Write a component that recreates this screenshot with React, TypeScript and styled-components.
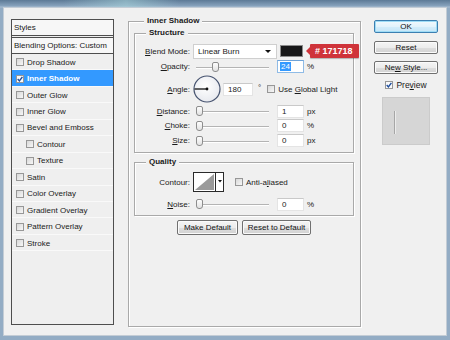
import React from 'react';
import styled, { createGlobalStyle } from 'styled-components';

const GlobalStyle = createGlobalStyle`
  html, body {
    margin: 0;
    padding: 0;
    background: #93acc4;
  }
  body {
    font-family: "Liberation Sans", Arial, sans-serif;
    font-size: 8px;
    color: #1a1a1a;
  }
  u {
    text-underline-offset: 1px;
  }
`;

const styleItems = [
  { name: 'Drop Shadow' },
  { name: 'Inner Shadow', checked: true, selected: true },
  { name: 'Outer Glow' },
  { name: 'Inner Glow' },
  { name: 'Bevel and Emboss' },
  { name: 'Contour', indent: true },
  { name: 'Texture', indent: true },
  { name: 'Satin' },
  { name: 'Color Overlay' },
  { name: 'Gradient Overlay' },
  { name: 'Pattern Overlay' },
  { name: 'Stroke' },
];

const Checkbox: React.FC<{ checked?: boolean }> = ({ checked }) => (
  <StyledBox $checked={checked}>
    {checked && (
      <svg width="6" height="6" viewBox="0 0 6 6">
        <path d="M0.7 3.1 L2.4 4.9 L5.4 0.9" fill="none" stroke="#1e4d9c" strokeWidth="1.4" />
      </svg>
    )}
  </StyledBox>
);

const Slider: React.FC<{ value: number }> = ({ value }) => (
  <StyledSlider>
    <Thumb style={{ left: `${(value / 100) * 66}px` }} />
  </StyledSlider>
);

const AngleDial: React.FC = () => (
  <svg width="28" height="28" viewBox="0 0 28 28">
    <defs>
      <radialGradient id="dialFill" cx="45%" cy="40%" r="65%">
        <stop offset="0%" stopColor="#ffffff" />
        <stop offset="100%" stopColor="#e6e8ee" />
      </radialGradient>
    </defs>
    <circle cx="14" cy="14" r="13" fill="url(#dialFill)" stroke="#46536f" strokeWidth="1.2" />
    <line x1="1.5" y1="14" x2="14" y2="14" stroke="#111" strokeWidth="1.3" />
    <circle cx="14" cy="14" r="1.4" fill="#111" />
  </svg>
);

const ContourPicker: React.FC = () => (
  <svg width="31" height="20" viewBox="0 0 31 20">
    <rect x="0.5" y="0.5" width="30" height="19" fill="#fff" stroke="#2a2a2a" />
    <polygon points="2,18 21,2 21,18" fill="#9a9a9a" />
    <line x1="22.5" y1="0.5" x2="22.5" y2="19.5" stroke="#2a2a2a" />
    <polygon points="25,8 29,8 27,10.5" fill="#111" />
  </svg>
);

const App: React.FC = () => {
  return (
    <>
      <GlobalStyle />
      <Window>
        <Content>
          <StylesList>
            <ListHead>Styles</ListHead>
            <ListOption>Blending Options: Custom</ListOption>
            {styleItems.map((item) => (
              <ListRow key={item.name} $selected={item.selected} $indent={item.indent}>
                <Checkbox checked={item.checked} />
                <span>{item.name}</span>
              </ListRow>
            ))}
          </StylesList>

          <OuterGroup>
            <Legend $ml={10}>Inner Shadow</Legend>
            <Group $mt={2}>
              <Legend $ml={11}>Structure</Legend>
              <GroupBody>
                <Row $h={16}>
                  <Label><u>B</u>lend Mode:</Label>
                  <Select>
                    <span>Linear Burn</span>
                    <Caret />
                  </Select>
                  <Swatch />
                  <ColorTag># 171718</ColorTag>
                </Row>
                <Row $h={15}>
                  <Label><u>O</u>pacity:</Label>
                  <Slider value={24} />
                  <Field $focused>
                    <Highlight>24</Highlight>
                  </Field>
                  <Unit>%</Unit>
                </Row>
                <Row $h={30}>
                  <Label><u>A</u>ngle:</Label>
                  <AngleDial />
                  <Field $w={30} $ml={2}>180</Field>
                  <Degree>°</Degree>
                  <CheckLabel $ml={6}>
                    <Checkbox />
                    <span>Use <u>G</u>lobal Light</span>
                  </CheckLabel>
                </Row>
                <Row $h={14}>
                  <Label><u>D</u>istance:</Label>
                  <Slider value={0} />
                  <Field>1</Field>
                  <Unit>px</Unit>
                </Row>
                <Row $h={15}>
                  <Label><u>C</u>hoke:</Label>
                  <Slider value={0} />
                  <Field>0</Field>
                  <Unit>%</Unit>
                </Row>
                <Row $h={15}>
                  <Label><u>S</u>ize:</Label>
                  <Slider value={0} />
                  <Field>0</Field>
                  <Unit>px</Unit>
                </Row>
              </GroupBody>
            </Group>

            <Group $mt={4}>
              <Legend $ml={11}>Quality</Legend>
              <GroupBody>
                <Row $h={20}>
                  <Label>Contour:</Label>
                  <ContourPicker />
                  <CheckLabel $ml={11}>
                    <Checkbox />
                    <span>Anti-a<u>l</u>iased</span>
                  </CheckLabel>
                </Row>
                <Row $h={14} $mt={5}>
                  <Label><u>N</u>oise:</Label>
                  <Slider value={0} />
                  <Field>0</Field>
                  <Unit>%</Unit>
                </Row>
              </GroupBody>
            </Group>

            <ButtonRow>
              <Button $w={61} $h={15}>Make Default</Button>
              <Button $w={69} $h={15}>Reset to Default</Button>
            </ButtonRow>
          </OuterGroup>

          <SideColumn>
            <Button $primary>OK</Button>
            <Button>Reset</Button>
            <Button>Ne<u>w</u> Style...</Button>
            <PreviewToggle>
              <Checkbox checked />
              <span>Pre<u>v</u>iew</span>
            </PreviewToggle>
            <PreviewThumb>
              <PreviewLine />
            </PreviewThumb>
          </SideColumn>
        </Content>
      </Window>
    </>
  );
};

const Window = styled.div`
  width: 450px;
  height: 340px;
  box-sizing: border-box;
  padding: 7px 3px 4px 3px;
  background:
    linear-gradient(90deg, rgba(170, 215, 220, 0) 14%, rgba(170, 215, 220, 0.55) 28%, rgba(170, 215, 220, 0) 40%) top / 100% 7px no-repeat,
    linear-gradient(#5d7a96 0px, #88a3bd 6px, #a9bdd1 7px, #93acc4 8px);
`;

const Content = styled.div`
  display: flex;
  align-items: flex-start;
  height: 100%;
  box-sizing: border-box;
  background: #f0f0f0;
  border: 1px solid #c3ccd5;
`;

const StylesList = styled.div`
  width: 103px;
  height: 306px;
  margin: 11px 0 0 7px;
  box-sizing: border-box;
  border: 1px solid #4e4e4e;
  background: #efefef;
  flex: none;
`;

const ListHead = styled.div`
  height: 15px;
  line-height: 15px;
  padding-left: 2px;
  background: #f7f7f7;
  border-bottom: 1px solid #4e4e4e;
`;

const ListOption = styled.div`
  height: 15px;
  line-height: 15px;
  margin-top: 1px;
  padding-left: 2px;
  background: #f7f7f7;
  border-top: 1px solid #4e4e4e;
  border-bottom: 1px solid #4e4e4e;
`;

const ListRow = styled.div<{ $selected?: boolean; $indent?: boolean }>`
  display: flex;
  align-items: center;
  gap: 3px;
  height: 16.45px;
  padding-left: ${(p) => (p.$indent ? 14 : 4)}px;
  box-shadow: inset 0 -1px 0 #f9f9f9;
  background: ${(p) => (p.$selected ? '#3399ff' : 'transparent')};
  color: ${(p) => (p.$selected ? '#fff' : '#1a1a1a')};
  font-weight: ${(p) => (p.$selected ? 'bold' : 'normal')};
`;

const StyledBox = styled.span<{ $checked?: boolean }>`
  display: inline-flex;
  align-items: center;
  justify-content: center;
  flex: none;
  width: 6px;
  height: 6px;
  border: 1px solid #979797;
  background: ${(p) => (p.$checked ? '#fafafa' : 'linear-gradient(135deg, #d8d8d8, #f7f7f7)')};
`;

const OuterGroup = styled.fieldset`
  margin: 8px 0 0 14px;
  padding: 0 6px 0 5px;
  min-width: 0;
  width: 233px;
  height: 311px;
  box-sizing: border-box;
  flex: none;
  border: 1px solid #a9a9a9;
  box-shadow: inset 1px 1px 0 #fff, 1px 1px 0 #fff;
`;

const Group = styled.fieldset<{ $mt?: number }>`
  margin: ${(p) => p.$mt ?? 0}px 0 0 0;
  padding: 0;
  min-width: 0;
  border: 1px solid #a9a9a9;
  box-shadow: inset 1px 1px 0 #fff, 1px 1px 0 #fff;
`;

const Legend = styled.legend<{ $ml: number }>`
  margin-left: ${(p) => p.$ml}px;
  padding: 0 3px;
  line-height: 10px;
  font-weight: bold;
  background: #f0f0f0;
`;

const GroupBody = styled.div`
  display: flex;
  flex-direction: column;
  padding: 5px 0 4px 0;
`;

const Row = styled.div<{ $h: number; $mt?: number }>`
  display: flex;
  align-items: center;
  height: ${(p) => p.$h}px;
  margin-top: ${(p) => p.$mt ?? 0}px;
`;

const Label = styled.span`
  width: 55px;
  margin-right: 3px;
  text-align: right;
  flex: none;
`;

const Select = styled.div`
  display: flex;
  align-items: center;
  justify-content: space-between;
  width: 84px;
  height: 15px;
  box-sizing: border-box;
  padding: 0 5px 0 4px;
  background: #fff;
  border: 1px solid #cfcfcf;
  flex: none;
`;

const Caret = styled.span`
  width: 0;
  height: 0;
  border-left: 3px solid transparent;
  border-right: 3px solid transparent;
  border-top: 3px solid #111;
`;

const Swatch = styled.span`
  width: 23px;
  height: 12px;
  margin-left: 3px;
  box-sizing: border-box;
  background: #171718;
  border: 1px solid #8c8c8c;
  flex: none;
`;

const ColorTag = styled.span`
  position: relative;
  display: flex;
  align-items: center;
  height: 14px;
  margin-left: 7px;
  padding: 0 6px 0 5px;
  background: #cf333a;
  color: #fff;
  font-size: 9px;
  font-weight: bold;
  white-space: nowrap;
  border-radius: 1px;
  box-shadow: 0 1px 1px rgba(0, 0, 0, 0.25);
  flex: none;

  &::before {
    content: '';
    position: absolute;
    left: -4px;
    top: 2.5px;
    border-top: 4.5px solid transparent;
    border-bottom: 4.5px solid transparent;
    border-right: 4px solid #cf333a;
  }
`;

const StyledSlider = styled.span`
  position: relative;
  width: 73px;
  height: 10px;
  margin: 0 8px 0 3px;
  flex: none;

  &::before {
    content: '';
    position: absolute;
    left: 0;
    right: 0;
    top: 5px;
    height: 1px;
    background: #b4b4b4;
    box-shadow: 0 1px 0 #fff;
  }
`;

const Thumb = styled.span`
  position: absolute;
  top: 0;
  width: 5px;
  height: 8px;
  background: linear-gradient(#fdfdfd, #e2e2e2);
  border: 1px solid #8d8d8d;
  border-radius: 2px 2px 3px 3px;
`;

const Field = styled.span<{ $w?: number; $ml?: number; $focused?: boolean }>`
  display: flex;
  align-items: center;
  width: ${(p) => p.$w ?? 27}px;
  height: 13px;
  margin-left: ${(p) => p.$ml ?? 0}px;
  box-sizing: border-box;
  padding-left: ${(p) => (p.$focused ? 2 : 4)}px;
  background: #fff;
  border: 1px solid ${(p) => (p.$focused ? '#8fbbe6' : '#e4e4e4')};
  border-top-color: ${(p) => (p.$focused ? '#6fa3d8' : '#c9c9c9')};
  flex: none;
`;

const Highlight = styled.span`
  padding: 0 1px;
  background: #3399ff;
  color: #fff;
  line-height: 9px;
`;

const Unit = styled.span`
  margin-left: 3px;
`;

const Degree = styled.span`
  margin-left: 5px;
  margin-top: -4px;
`;

const CheckLabel = styled.span<{ $ml: number }>`
  display: flex;
  align-items: center;
  gap: 3px;
  margin-left: ${(p) => p.$ml}px;
`;

const ButtonRow = styled.div`
  display: flex;
  justify-content: center;
  gap: 4px;
  margin-top: 4px;
`;

const Button = styled.button<{ $w?: number; $h?: number; $primary?: boolean }>`
  width: ${(p) => p.$w ?? 64}px;
  height: ${(p) => p.$h ?? 13}px;
  padding: 0;
  font-family: "Liberation Sans", Arial, sans-serif;
  font-size: 8px;
  color: #111;
  border: 1px solid ${(p) => (p.$primary ? '#3c7fb1' : '#707070')};
  border-radius: 2px;
  background: ${(p) =>
    p.$primary
      ? 'linear-gradient(#f2f9fd, #e3f3fc 50%, #d4edfb 51%, #c6e6f8)'
      : 'linear-gradient(#f4f4f4, #ececec 50%, #dedede 51%, #d2d2d2)'};
  box-shadow: ${(p) => (p.$primary ? 'inset 0 0 0 1px #9fdcf6' : 'inset 0 0 0 1px #fbfbfb')};
  flex: none;
`;

const SideColumn = styled.div`
  display: flex;
  flex-direction: column;
  align-items: center;
  gap: 7.5px;
  width: 64px;
  margin: 12px 0 0 13px;
  flex: none;
`;

const PreviewToggle = styled.div`
  display: flex;
  align-items: center;
  gap: 3px;
  height: 9px;
  margin-top: -1.5px;
  font-size: 8.5px;
`;

const PreviewThumb = styled.div`
  display: flex;
  width: 48px;
  height: 48px;
  box-sizing: border-box;
  margin-top: 0.5px;
  padding: 13px 0 0 11px;
  background: #d6d6d6;
  border: 1px solid #cbcbcb;
`;

const PreviewLine = styled.span`
  width: 1px;
  height: 23px;
  background: #a6a6a6;
  box-shadow: 1px 0 0 #ececec;
`;

export default App;
